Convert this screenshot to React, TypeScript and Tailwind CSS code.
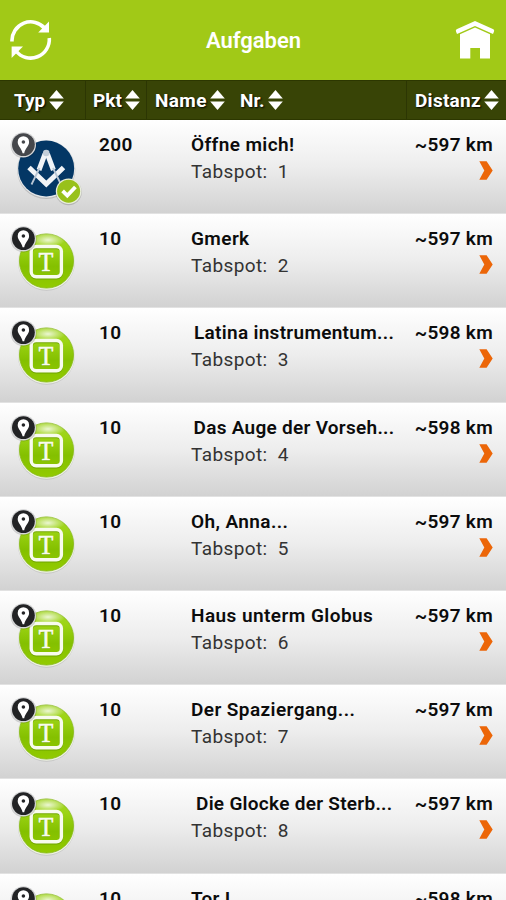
type Task = {
    kind: "compass" | "text";
    points: number;
    name: string;
    nameClass: string;
    nr: number;
    distance: string;
};

const tasks: Task[] = [
    { kind: "compass", points: 200, name: "Öffne mich!", nameClass: "tracking-[0.38px]", nr: 1, distance: "~597 km" },
    { kind: "text", points: 10, name: "Gmerk", nameClass: "tracking-[0.4px]", nr: 2, distance: "~597 km" },
    { kind: "text", points: 10, name: "Latina instrumentum...", nameClass: "pl-[3px] tracking-[0.3px]", nr: 3, distance: "~598 km" },
    { kind: "text", points: 10, name: "Das Auge der Vorseh...", nameClass: "pl-[2.5px] tracking-[0.28px]", nr: 4, distance: "~598 km" },
    { kind: "text", points: 10, name: "Oh, Anna...", nameClass: "tracking-[0.4px]", nr: 5, distance: "~597 km" },
    { kind: "text", points: 10, name: "Haus unterm Globus", nameClass: "tracking-[0.44px]", nr: 6, distance: "~597 km" },
    { kind: "text", points: 10, name: "Der Spaziergang...", nameClass: "tracking-[0.42px]", nr: 7, distance: "~597 km" },
    { kind: "text", points: 10, name: "Die Glocke der Sterb...", nameClass: "pl-[5px] tracking-[0.28px]", nr: 8, distance: "~597 km" },
    { kind: "text", points: 10, name: "Tor I", nameClass: "tracking-[0.3px]", nr: 9, distance: "~598 km" },
];

function RefreshIcon() {
    return (
        <svg width="42" height="42" viewBox="0 0 42 42">
            <g fill="none" stroke="#fff" strokeWidth="3.6">
                <path d="M2 22.5A18.7 18.7 0 0 1 35 9.5" />
                <path d="M39.3 19A18.7 18.7 0 0 1 6 32" />
            </g>
            <path d="M39 2.5V13.6H28.2Z" fill="#fff" />
            <path d="M1.6 27.5H13L1.6 39Z" fill="#fff" />
        </svg>
    );
}

function HomeIcon() {
    return (
        <svg width="40" height="38" viewBox="0 0 40 38" fill="#fff">
            <path d="M20 0 38.4 8.2Q39.6 9 39 10.4L38 12.9 20 4.9 2 12.9 1 10.4Q.4 9 1.6 8.2Z" />
            <path d="M20 6.6 35 13.3V37.5H25V27H15.3V37.5H5V13.3Z" />
        </svg>
    );
}

function SortIcon() {
    return (
        <svg width="15" height="20" viewBox="0 0 15 20" className="shrink-0" fill="#fff">
            <path d="M7.5 0 14.8 8.6H.2Z" />
            <path d="M.2 11.4H14.8L7.5 20Z" />
        </svg>
    );
}

function Chevron() {
    return (
        <svg width="14" height="19" viewBox="0 0 14 19">
            <path d="M.3.3H7.6L13.7 9.5 7.6 18.7H.3L5.3 9.5Z" fill="#ec6608" />
        </svg>
    );
}

function TaskIcon({ kind }: { kind: Task["kind"] }) {
    const pinFill = kind === "compass" ? "#45474b" : "#222325";
    return (
        <svg width="86" height="94" viewBox="0 0 86 94" className="shrink-0">
            <defs>
                <linearGradient id="ball" x1="0" y1="0" x2="0" y2="1">
                    <stop offset="0" stopColor="#a5d62c" />
                    <stop offset="0.25" stopColor="#9cd414" />
                    <stop offset="0.6" stopColor="#84c000" />
                    <stop offset="1" stopColor="#92cb00" />
                </linearGradient>
                <radialGradient id="shine">
                    <stop offset="0" stopColor="#fff" stopOpacity="0.8" />
                    <stop offset="1" stopColor="#fff" stopOpacity="0" />
                </radialGradient>
            </defs>
            {kind === "compass" ? (
                <g>
                    <circle cx="46.2" cy="49.8" r="29.2" fill="#000" fillOpacity="0.14" />
                    <circle cx="46.2" cy="49" r="28.8" fill="#e6e8ea" />
                    <circle cx="46.2" cy="48.5" r="28" fill="#043765" />
                    <g fill="none" stroke="#f1f4f7">
                        <path d="M29 47.5 46.3 64 63.5 47.5" strokeWidth="5" />
                        <path d="M45 34 39 50" strokeWidth="5" />
                        <path d="M47.4 34 53.4 50" strokeWidth="5" />
                        <path d="M39.5 48 31.5 64.5" stroke="#b9c6d4" strokeWidth="1.8" />
                        <path d="M53 48 61 64.5" stroke="#b9c6d4" strokeWidth="1.8" />
                    </g>
                    <circle cx="46.2" cy="33" r="3.3" fill="#c3ced9" />
                </g>
            ) : (
                <g>
                    <circle cx="46.5" cy="48.2" r="28.5" fill="#000" fillOpacity="0.1" />
                    <circle cx="46.5" cy="47.6" r="28.2" fill="#eef3e2" />
                    <circle cx="46.5" cy="47" r="27.1" fill="url(#ball)" stroke="#86b81a" strokeWidth="0.8" />
                    <ellipse cx="48" cy="26" rx="17" ry="7" fill="url(#shine)" />
                    <rect x="31.2" y="33.5" width="30.2" height="30.2" rx="5" fill="none" stroke="#5f8f00" strokeOpacity="0.6" strokeWidth="3.6" />
                    <rect x="31.2" y="32.5" width="30.2" height="30.2" rx="5" fill="none" stroke="#f8fbee" strokeWidth="3.4" />
                    <text x="39" y="58" textLength="14.5" lengthAdjust="spacingAndGlyphs" fill="#5f8f00" fillOpacity="0.6" className="font-['Liberation_Serif',serif] text-[27px]">T</text>
                    <text x="38.7" y="57.2" textLength="14.5" lengthAdjust="spacingAndGlyphs" fill="#f8fbee" stroke="#f8fbee" strokeWidth="0.7" className="font-['Liberation_Serif',serif] text-[27px]">T</text>
                </g>
            )}
            <circle cx="23.6" cy="25.4" r="13" fill="#000" fillOpacity="0.16" />
            <circle cx="23.4" cy="24.8" r="12.6" fill="#d6d7d8" />
            <circle cx="23.4" cy="24.6" r="11.4" fill={pinFill} />
            <path d="M23.4 16.2A5.7 5.7 0 0 1 29.1 21.9C29.1 25.8 25.2 28 24.2 33.3H22.6C21.6 28 17.7 25.8 17.7 21.9A5.7 5.7 0 0 1 23.4 16.2Z" fill="#fff" />
            <circle cx="23.4" cy="22" r="1.8" fill={pinFill} />
            {kind === "compass" && (
                <g>
                    <circle cx="68.6" cy="72" r="13.2" fill="#000" fillOpacity="0.16" />
                    <circle cx="68.6" cy="71.2" r="12.8" fill="#e9eedb" />
                    <circle cx="68.6" cy="71.2" r="11.5" fill="#98c11b" />
                    <path d="M62.6 70.8 67.3 75.6 75.4 67" fill="none" stroke="#fff" strokeWidth="3.8" />
                </g>
            )}
        </svg>
    );
}

function TaskRow({ task }: { task: Task }) {
    return (
        <div className="flex h-[94.2px] shrink-0 border-b border-[#e2e2e2] bg-linear-to-b from-white via-[#ededed] to-[#d2d2d2] text-[#0c0c0c]">
            <TaskIcon kind={task.kind} />
            <div className="w-[105px] shrink-0 pt-[13px] pl-[13px] text-[19px] leading-6 font-semibold tracking-[0.4px]">
                {task.points}
            </div>
            <div className="min-w-0 flex-1 pt-[13px] whitespace-nowrap">
                <div className={`text-[19px] leading-6 font-semibold ${task.nameClass}`}>{task.name}</div>
                <div className="mt-[3px] text-[19px] leading-6 tracking-[0.4px] text-[#333]">
                    Tabspot:<span className="ml-[10px]">{task.nr}</span>
                </div>
            </div>
            <div className="flex w-[100px] shrink-0 flex-col items-end pt-[13px] pr-[13px]">
                <div className="text-[19px] leading-6 font-semibold tracking-[0.3px] whitespace-nowrap">{task.distance}</div>
                <div className="mt-1">
                    <Chevron />
                </div>
            </div>
        </div>
    );
}

export default function App() {
    return (
        <div className="flex h-[900px] w-[506px] flex-col overflow-hidden bg-white font-[Roboto,sans-serif]">
            <header className="flex h-[80px] shrink-0 items-center justify-between bg-[#a1c917] pr-[11px] pl-[10px]">
                <RefreshIcon />
                <h1 className="pt-px text-[22px] font-semibold text-white">Aufgaben</h1>
                <HomeIcon />
            </header>
            <div className="flex h-[40px] shrink-0 border-y border-[#2c3700] bg-[#384406] text-[19px] font-bold text-white [text-shadow:1px_1px_2px_#000]">
                <div className="flex w-[86px] items-center gap-[4px] border-r border-[#2c3603] pl-[14px]">
                    <span className="pt-[2px]">Typ</span>
                    <SortIcon />
                </div>
                <div className="flex w-[61px] items-center gap-[3px] border-r border-[#2c3603] pl-[7px]">
                    <span className="pt-[2px]">Pkt</span>
                    <SortIcon />
                </div>
                <div className="flex w-[260px] items-center border-r border-[#2c3603] pl-[8px]">
                    <div className="flex w-[85px] items-center gap-[3px]">
                        <span className="pt-[2px] tracking-[0.4px]">Name</span>
                        <SortIcon />
                    </div>
                    <div className="flex items-center gap-[4px]">
                        <span className="pt-[2px]">Nr.</span>
                        <SortIcon />
                    </div>
                </div>
                <div className="flex flex-1 items-center gap-[3px] pl-[8px]">
                    <span className="pt-[2px] tracking-[0.25px]">Distanz</span>
                    <SortIcon />
                </div>
            </div>
            <main className="flex flex-col">
                {tasks.map((task) => (
                    <TaskRow key={task.nr} task={task} />
                ))}
            </main>
        </div>
    );
}
